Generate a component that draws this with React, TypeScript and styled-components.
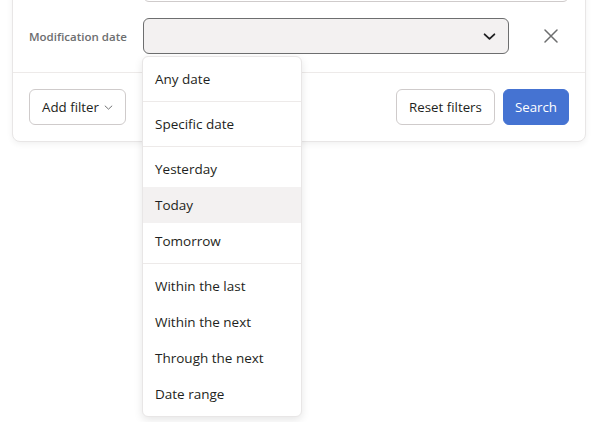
import React from 'react';
import styled, { createGlobalStyle } from 'styled-components';

const GlobalStyle = createGlobalStyle`
  html, body {
    margin: 0;
    padding: 0;
    height: 100%;
    background: #ffffff;
  }
  body {
    font-family: 'Open Sans', 'Noto Sans', sans-serif;
    color: #1e1f21;
  }
  #root {
    height: 100%;
  }
`;

const Page = styled.div`
  box-sizing: border-box;
  height: 100%;
  padding: 0 6px 0 12px;
  width: 592px;
`;

// the panel is scrolled, its top lies above the window
const Card = styled.div`
  margin-top: -35px;
  background: #fff;
  border: 1px solid #e8e6e6;
  border-radius: 8px;
  box-shadow: 0 2px 6px rgba(0, 0, 0, 0.06);
`;

const Filters = styled.div`
  display: flex;
  flex-direction: column;
  gap: 16px;
  padding: 0 16px 18px 16px;
`;

const Row = styled.div`
  display: grid;
  grid-template-columns: 114px 1fr 60px;
  align-items: center;
  height: 36px;
`;

const Label = styled.div`
  font-size: 11.5px;
  font-weight: 600;
  color: #6d6e6f;
`;

const TextInput = styled.div`
  grid-column: 2 / 4;
  height: 34px;
  border: 1px solid #cfcbcb;
  border-radius: 6px;
`;

const SelectWrap = styled.div`
  position: relative;
  height: 36px;
`;

const Select = styled.div`
  box-sizing: border-box;
  height: 36px;
  background: #f3f1f1;
  border: 1px solid #6d6e6f;
  border-radius: 6px;
  display: flex;
  align-items: center;
  justify-content: flex-end;
  padding-right: 12px;
`;

const IconButton = styled.div`
  justify-self: end;
  width: 36px;
  height: 36px;
  display: flex;
  align-items: center;
  justify-content: center;
  color: #6d6e6f;
`;

const Footer = styled.div`
  border-top: 1px solid #edeae9;
  display: flex;
  align-items: center;
  padding: 16px;
  gap: 8px;
`;

const Spacer = styled.div`
  flex: 1;
`;

const Button = styled.button<{ $primary?: boolean }>`
  box-sizing: border-box;
  height: 36px;
  padding: 0 ${p => (p.$primary ? '11px' : '12px')};
  border-radius: 6px;
  font-family: inherit;
  font-size: 13.3px;
  display: flex;
  align-items: center;
  gap: 5px;
  border: 1px solid ${p => (p.$primary ? '#4573d2' : '#cfcbcb')};
  background: ${p => (p.$primary ? '#4573d2' : '#fff')};
  color: ${p => (p.$primary ? '#fff' : '#1e1f21')};
`;

const Menu = styled.div`
  position: absolute;
  top: calc(100% + 2px);
  left: -1px;
  width: 160px;
  box-sizing: border-box;
  background: #fff;
  border: 1px solid #e8e6e6;
  border-radius: 6px;
  box-shadow: 0 3px 8px rgba(0, 0, 0, 0.1);
  padding: 4px 0;
  z-index: 10;
`;

const Item = styled.div<{ $active?: boolean }>`
  height: 36px;
  display: flex;
  align-items: center;
  padding: 0 12px;
  font-size: 13.5px;
  color: #1e1f21;
  background: ${p => (p.$active ? '#f3f1f1' : 'transparent')};
`;

const Separator = styled.div`
  height: 1px;
  background: #edeae9;
  margin: 4px 0;
`;

const groups = [
  ['Any date'],
  ['Specific date'],
  ['Yesterday', 'Today', 'Tomorrow'],
  ['Within the last', 'Within the next', 'Through the next', 'Date range'],
];

const Chevron = ({ size = 12, width = 1.6 }: { size?: number; width?: number }) => (
  <svg width={size} height={size} viewBox="0 0 12 12" fill="none">
    <path d="M1.5 4 L6 8.2 L10.5 4" stroke="currentColor" strokeWidth={width} strokeLinecap="round" strokeLinejoin="round" />
  </svg>
);

const App: React.FC = () => {
  return (
    <Page>
      <GlobalStyle />
      <Card>
        <Filters>
          <Row>
            <Label />
            <TextInput />
          </Row>
          <Row>
            <Label>Modification date</Label>
            <SelectWrap>
              <Select>
                <span style={{ color: '#1e1f21', display: 'flex' }}>
                  <Chevron size={13} width={1.7} />
                </span>
              </Select>
              <Menu>
                {groups.map((g, i) => (
                  <React.Fragment key={i}>
                    {i > 0 && <Separator />}
                    {g.map(label => (
                      <Item key={label} $active={label === 'Today'}>{label}</Item>
                    ))}
                  </React.Fragment>
                ))}
              </Menu>
            </SelectWrap>
            <IconButton>
              <svg width="14" height="14" viewBox="0 0 14 14" fill="none">
                <path d="M1 1 L13 13 M13 1 L1 13" stroke="currentColor" strokeWidth="1.5" strokeLinecap="round" />
              </svg>
            </IconButton>
          </Row>
        </Filters>
        <Footer>
          <Button>
            Add filter
            <span style={{ display: 'flex', color: '#6d6e6f' }}>
              <Chevron size={9} width={1.3} />
            </span>
          </Button>
          <Spacer />
          <Button>Reset filters</Button>
          <Button $primary>Search</Button>
        </Footer>
      </Card>
    </Page>
  );
};

export default App;
